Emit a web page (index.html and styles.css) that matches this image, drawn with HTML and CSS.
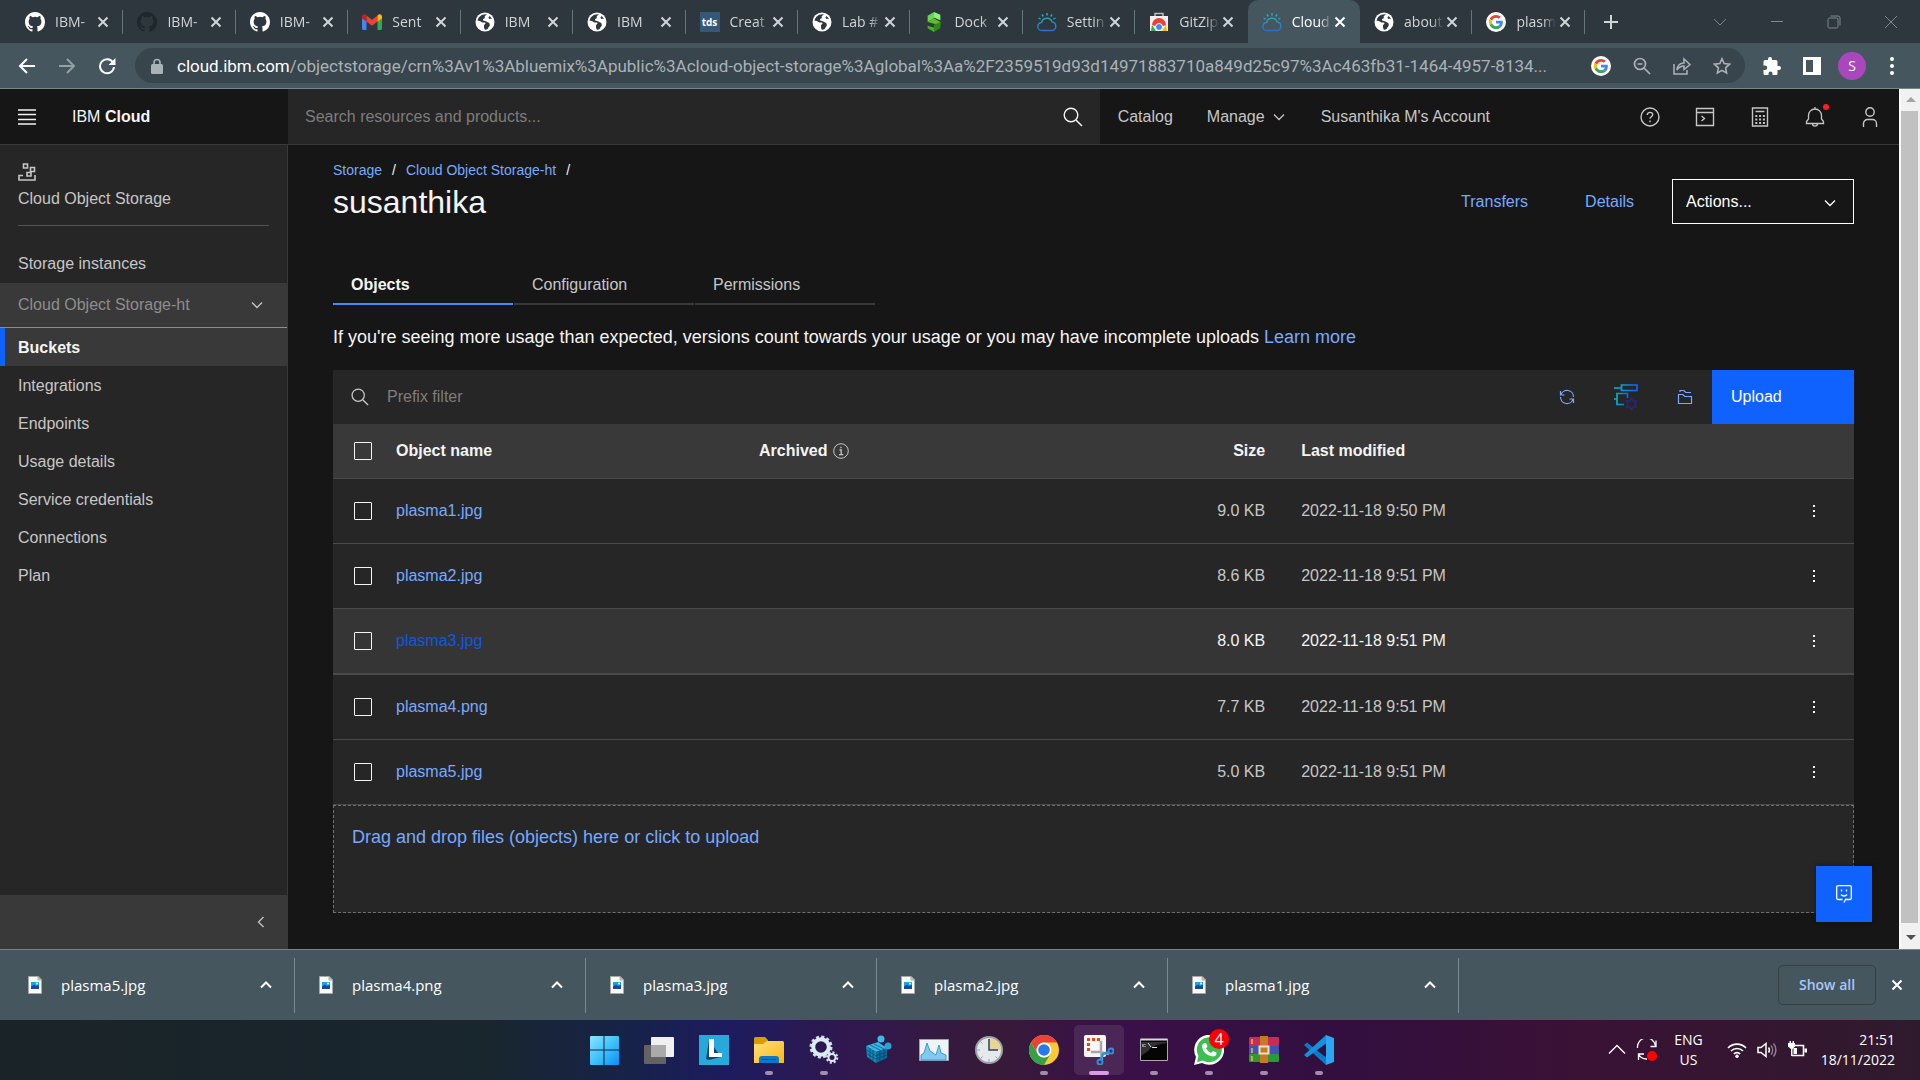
FILE: index.html
```html
<!DOCTYPE html>
<html lang="en">
<head>
<meta charset="utf-8">
<title>Cloud Object Storage - IBM Cloud</title>
<link rel="stylesheet" href="styles.css">
</head>
<body>
<svg class="defs" aria-hidden="true">
  <defs>
    <linearGradient id="sky" x1="0" y1="0" x2="0" y2="1"><stop offset="0" stop-color="#2fb5b0"/><stop offset="1" stop-color="#2a6fc9"/></linearGradient>
    <linearGradient id="win" x1="0" y1="0" x2="1" y2="1"><stop offset="0" stop-color="#8be4ff"/><stop offset=".5" stop-color="#41c2fb"/><stop offset="1" stop-color="#0a8ff5"/></linearGradient>
    <linearGradient id="fold" x1="0" y1="0" x2="1" y2="1"><stop offset="0" stop-color="#ffe07a"/><stop offset="1" stop-color="#fbb615"/></linearGradient>
    <linearGradient id="query" x1="0" y1="0" x2="1" y2="0"><stop offset="0" stop-color="#08bdba"/><stop offset="1" stop-color="#0f62fe"/></linearGradient>
  </defs>
  <symbol id="x" viewBox="0 0 12 12"><path d="M1.5 1.5l9 9M10.500 1.500l-9 9" stroke="currentColor" stroke-width="2" fill="none"/></symbol>
  <symbol id="github" viewBox="0 0 16 16"><path fill="currentColor" d="M8 0C3.580 0 0 3.580 0 8c0 3.540 2.290 6.530 5.470 7.590.4.070.55-.17.55-.38 0-.19-.01-.82-.01-1.490-2.010.37-2.530-.49-2.690-.94-.09-.23-.48-.94-.82-1.130-.28-.15-.68-.52-.01-.53.63-.01 1.080.58 1.230.82.72 1.210 1.870.87 2.330.66.07-.52.28-.87.51-1.070-1.780-.2-3.640-.89-3.640-3.950 0-.87.31-1.590.82-2.150-.08-.2-.36-1.020.08-2.120 0 0 .67-.21 2.200.82a7.600 7.600 0 0 1 4 0c1.530-1.040 2.200-.82 2.200-.82.44 1.100.16 1.920.08 2.120.51.56.82 1.270.82 2.150 0 3.070-1.870 3.750-3.650 3.950.29.25.54.73.54 1.480 0 1.070-.01 1.930-.01 2.200 0 .21.15.46.55.38A8 8 0 0 0 16 8c0-4.420-3.580-8-8-8z"/></symbol>
  <symbol id="gmail" viewBox="0 0 20 16"><path fill="#4285f4" d="M0 3v11.500C0 15.300.7 16 1.500 16H4.500V6z"/><path fill="#34a853" d="M20 3v11.500c0 .8-.7 1.500-1.500 1.500h-3V6z"/><path fill="#ea4335" d="M4.500 1.500L10 5.700l5.500-4.200v6L10 11.700 4.500 7.500z"/><path fill="#c5221f" d="M0 3v1.500l4.500 3v-6L3.600.7C2.100-.4 0 .6 0 3z"/><path fill="#fbbc04" d="M20 3v1.500l-4.500 3v-6l.9-.8C17.900-.4 20 .6 20 3z"/></symbol>
  <symbol id="globe" viewBox="0 0 20 20"><circle cx="10" cy="10" r="9.500" fill="#fff"/><path fill="#2d373d" d="M10.500 2.200C6.500 2.200 3 5 2.600 8.800c1.200-.3 2.600 0 3.600.9.900.9 2.300 1 3.400.8.9.1 1.200.8.6 1.500-.9.800-1.400 1.400-1.200 2.400.1 1 .1 2 .6 3.200 1 .1 2.200-.1 3.100-.6.300-1.600 1.600-2.300 2-3.600.4-1.500-.4-2.800-1.900-3.200-1.300-.3-1.600-1.300-2.900-1.300-1.100 0-1.900-.4-1.900-1.200 0-.9 1.300-.8 1.800-1.600.4-.8-.6-1.400.1-2.200.5-.5 1.200-.8 2.100-1.300zM14.500 4c-.9.800-1.300 1.800-.5 2.500.8.800 1.900.4 3 .7-.5-1.300-1.400-2.400-2.500-3.200z"/></symbol>
  <symbol id="sway" viewBox="0 0 16 22"><path fill="#8bf37c" d="M8 0l7 3v6L8 6z"/><path fill="#6bd25a" d="M8 0L1 4v7l7-4z"/><path fill="#5fbd2a" d="M1 11l7-4 7 4v3l-7-1z"/><path fill="#2e8b17" d="M15 11v7l-7 4v-8z"/><path fill="#45b12a" d="M1 15l7 2v5l-7-4z"/></symbol>
  <symbol id="ibmcloud" viewBox="0 0 20 20"><path fill="none" stroke="url(#sky)" stroke-width="1.400" d="M5 18.500a4 4 0 0 1-.4-8 5.500 5.500 0 0 1 10.500-.6 4.400 4.400 0 0 1 .4 8.600zM10 1v2.500M5 2.500l1.300 2M15 2.500l-1.300 2M1.500 6l2.200 1.200M18.500 6l-2.200 1.200"/></symbol>
  <symbol id="store" viewBox="0 0 20 20"><path d="M6 5V1.500h8V5" fill="none" stroke="#b9bdc0" stroke-width="1.500"/><path fill="#f1f1f1" d="M1 4h18v15H1z"/><path fill="#ea4335" d="M3 13a7 7 0 0 1 14 0l-3 1H6z"/><path fill="#34a853" d="M3 13l4 6H2z"/><path fill="#fbbc04" d="M17 13l-4 6h5z"/><circle cx="10" cy="15" r="3.500" fill="#4285f4" stroke="#fff"/></symbol>
  <symbol id="google" viewBox="0 0 48 48"><circle cx="24" cy="24" r="24" fill="#fff"/><g transform="translate(7 7) scale(.71)"><path fill="#EA4335" d="M24 9.500c3.540 0 6.710 1.220 9.210 3.600l6.850-6.850C35.900 2.380 30.470 0 24 0 14.620 0 6.510 5.380 2.560 13.220l7.980 6.190C12.430 13.720 17.740 9.500 24 9.500z"/><path fill="#4285F4" d="M46.980 24.550c0-1.570-.15-3.090-.38-4.550H24v9.020h12.940c-.58 2.960-2.260 5.480-4.780 7.180l7.730 6c4.510-4.180 7.090-10.360 7.090-17.650z"/><path fill="#FBBC05" d="M10.530 28.590A14.500 14.500 0 0 1 9.770 24c0-1.600.27-3.140.76-4.590l-7.980-6.190A24 24 0 0 0 0 24c0 3.870.92 7.540 2.560 10.780z"/><path fill="#34A853" d="M24 48c6.480 0 11.930-2.130 15.890-5.810l-7.730-6c-2.150 1.450-4.920 2.300-8.160 2.300-6.260 0-11.570-4.220-13.470-9.910l-7.980 6.190C6.510 42.620 14.620 48 24 48z"/></g></symbol>
  <symbol id="down" viewBox="0 0 16 16"><path d="M3 5.500l5 5 5-5" fill="none" stroke="currentColor" stroke-width="1.300"/></symbol>
  <symbol id="up" viewBox="0 0 14 14"><path d="M2 9.500l5-5 5 5" fill="none" stroke="currentColor" stroke-width="2"/></symbol>
  <symbol id="search" viewBox="0 0 20 20"><circle cx="8" cy="8" r="6.800" fill="none" stroke="currentColor" stroke-width="1.400"/><path d="M13 13l6 6" stroke="currentColor" stroke-width="1.500"/></symbol>
  <symbol id="kebab" viewBox="0 0 16 16"><path fill="currentColor" d="M7 2h2v2H7zM7 7h2v2H7zM7 12h2v2H7z"/></symbol>
  <symbol id="imgfile" viewBox="0 0 14 18"><path fill="#fdfdfd" stroke="#a8a8a8" d="M.5.500h9.500L13.500 4v13.500H.5z"/><path fill="#ccc" stroke="#a8a8a8" d="M10 .5V4h3.500z"/><path fill="#18a4e0" d="M3 6h8v7H3z"/><path fill="#154a9c" d="M3 10.500l3-2 2 1.500 3-1v4H3z"/><circle cx="9" cy="7.500" r="1" fill="#fff"/></symbol>
</svg>

<header class="browser">
  <div class="strip">
    <nav class="tabs" aria-label="Open tabs">
      <div class="tab"><svg class="fav"><use href="#github"/></svg><span class="name">IBM-</span><button class="close" aria-label="Close"><svg><use href="#x"/></svg></button></div>
      <div class="tab"><svg class="fav dim"><use href="#github"/></svg><span class="name">IBM-</span><button class="close" aria-label="Close"><svg><use href="#x"/></svg></button></div>
      <div class="tab"><svg class="fav"><use href="#github"/></svg><span class="name">IBM-</span><button class="close" aria-label="Close"><svg><use href="#x"/></svg></button></div>
      <div class="tab"><svg class="fav"><use href="#gmail"/></svg><span class="name">Sent</span><button class="close" aria-label="Close"><svg><use href="#x"/></svg></button></div>
      <div class="tab"><svg class="fav"><use href="#globe"/></svg><span class="name">IBM</span><button class="close" aria-label="Close"><svg><use href="#x"/></svg></button></div>
      <div class="tab"><svg class="fav"><use href="#globe"/></svg><span class="name">IBM</span><button class="close" aria-label="Close"><svg><use href="#x"/></svg></button></div>
      <div class="tab"><span class="fav tds">tds</span><span class="name">Creat</span><button class="close" aria-label="Close"><svg><use href="#x"/></svg></button></div>
      <div class="tab"><svg class="fav"><use href="#globe"/></svg><span class="name">Lab #</span><button class="close" aria-label="Close"><svg><use href="#x"/></svg></button></div>
      <div class="tab"><svg class="fav"><use href="#sway"/></svg><span class="name">Dock</span><button class="close" aria-label="Close"><svg><use href="#x"/></svg></button></div>
      <div class="tab"><svg class="fav"><use href="#ibmcloud"/></svg><span class="name">Settin</span><button class="close" aria-label="Close"><svg><use href="#x"/></svg></button></div>
      <div class="tab last-before"><svg class="fav"><use href="#store"/></svg><span class="name">GitZip</span><button class="close" aria-label="Close"><svg><use href="#x"/></svg></button></div>
      <div class="tab active"><svg class="fav"><use href="#ibmcloud"/></svg><span class="name">Cloud</span><button class="close" aria-label="Close"><svg><use href="#x"/></svg></button></div>
      <div class="tab"><svg class="fav"><use href="#globe"/></svg><span class="name">about</span><button class="close" aria-label="Close"><svg><use href="#x"/></svg></button></div>
      <div class="tab"><svg class="fav"><use href="#google"/></svg><span class="name">plasm</span><button class="close" aria-label="Close"><svg><use href="#x"/></svg></button></div>
    </nav>
    <div class="window">
      <button class="plus" aria-label="New tab"><svg viewBox="0 0 16 16"><path d="M8 1v14M1 8h14" stroke="currentColor" stroke-width="2"/></svg></button>
      <button aria-label="Search tabs"><svg viewBox="0 0 14 14"><path d="M1 4l6 6 6-6" fill="none" stroke="currentColor"/></svg></button>
      <button aria-label="Minimise"><svg viewBox="0 0 14 14"><path d="M1 6.500h12" stroke="currentColor"/></svg></button>
      <button aria-label="Restore"><svg viewBox="0 0 14 14"><rect x="1" y="3" width="10" height="10" rx="1.500" fill="none" stroke="currentColor"/><path d="M3.500 1H11a2 2 0 0 1 2 2v7.500" fill="none" stroke="currentColor"/></svg></button>
      <button aria-label="Close window"><svg viewBox="0 0 14 14"><path d="M1 1l12 12M13 1L1 13" stroke="currentColor"/></svg></button>
    </div>
  </div>
  <div class="toolbar">
    <button class="tool" aria-label="Back"><svg viewBox="0 0 18 18"><path d="M17 9H2M9 2L2 9l7 7" fill="none" stroke="currentColor" stroke-width="2"/></svg></button>
    <button class="tool faded" aria-label="Forward"><svg viewBox="0 0 18 18"><path d="M1 9h15M9 2l7 7-7 7" fill="none" stroke="currentColor" stroke-width="2"/></svg></button>
    <button class="tool" aria-label="Reload"><svg viewBox="0 0 18 18"><path d="M15 5.500A7 7 0 1 0 16 10" fill="none" stroke="currentColor" stroke-width="2"/><path d="M17.500 1v7h-7z" fill="currentColor"/></svg></button>
    <div class="omnibox">
      <svg class="lock" viewBox="0 0 12 16"><path d="M3 7V4.500a3 3 0 0 1 6 0V7" fill="none" stroke="currentColor" stroke-width="1.600"/><rect x="0" y="6" width="12" height="10" rx="1.500" fill="currentColor"/></svg>
      <div class="url" role="textbox" aria-label="Address"><b>cloud.ibm.com</b>/objectstorage/crn%3Av1%3Abluemix%3Apublic%3Acloud-object-storage%3Aglobal%3Aa%2F2359519d93d14971883710a849d25c97%3Ac463fb31-1464-4957-8134...</div>
      <div class="page-tools">
        <svg class="g"><use href="#google"/></svg>
        <svg viewBox="0 0 18 18"><circle cx="7" cy="7" r="5.500" fill="none" stroke="currentColor" stroke-width="1.700"/><path d="M11 11l6 6M4.500 7h5" stroke="currentColor" stroke-width="1.700"/></svg>
        <svg viewBox="0 0 18 18"><path d="M1 7v10h13v-4M4 13c.5-5 3.500-7 7-7V2l6 5.500-6 5V9c-3 0-5 1-7 4z" fill="none" stroke="currentColor" stroke-width="1.500"/></svg>
        <svg viewBox="0 0 18 18"><path d="M9 1.800l2.200 4.800 5.300.6-3.900 3.600 1 5.200L9 13.400 4.400 16l1-5.200L1.500 7.200l5.300-.6z" fill="none" stroke="currentColor" stroke-width="1.600"/></svg>
      </div>
    </div>
    <div class="extensions">
      <button class="tool" aria-label="Extensions"><svg viewBox="0 0 18 18"><path fill="currentColor" d="M7 0a2 2 0 0 1 2 2v1h4a1.500 1.500 0 0 1 1.500 1.500V9H16a2 2 0 0 1 0 4h-1.500v3.500A1.500 1.500 0 0 1 13 18H9.500v-1.500a2 2 0 0 0-4 0V18H2A1.500 1.500 0 0 1 .5 16.500V13H2a2 2 0 0 0 0-4.500H.5v-4A1.500 1.500 0 0 1 2 3h3V2a2 2 0 0 1 2-2z"/></svg></button>
      <button class="tool" aria-label="Side panel"><svg viewBox="0 0 18 18"><path fill="currentColor" fill-rule="evenodd" d="M0 0h18v18H0zM3 3v12h7V3z"/></svg></button>
      <button class="avatar" aria-label="Profile">S</button>
      <button class="tool" aria-label="Menu"><svg viewBox="0 0 18 18"><circle cx="9" cy="2" r="2" fill="currentColor"/><circle cx="9" cy="9" r="2" fill="currentColor"/><circle cx="9" cy="16" r="2" fill="currentColor"/></svg></button>
    </div>
  </div>
</header>

<div class="viewport">
  <div class="page">
    <header class="masthead">
      <div class="brand">
        <button class="burger" aria-label="Main menu"><svg viewBox="0 0 18 16"><path d="M0 1h18M0 5.500h18M0 10.500h18M0 15h18" stroke="currentColor" stroke-width="1.300"/></svg></button>
        <a href="#">IBM <b>Cloud</b></a>
      </div>
      <label class="finder"><input type="search" aria-label="Search" placeholder="Search resources and products..."><svg><use href="#search"/></svg></label>
      <nav class="links"><a href="#">Catalog</a><a href="#">Manage <svg><use href="#down"/></svg></a><a href="#">Susanthika M's Account</a></nav>
      <div class="actions">
        <button aria-label="Help"><svg viewBox="0 0 20 20" fill="none" stroke="currentColor" stroke-width="1.400"><circle cx="10" cy="10" r="9"/><path d="M7.300 8c0-3.500 5.400-3.500 5.400-.3 0 2-2.700 2-2.700 4M10 13.500v1.700"/></svg></button>
        <button aria-label="Shell"><svg viewBox="0 0 20 20" fill="none" stroke="currentColor" stroke-width="1.400"><path d="M1.500 1.500h17v17h-17zM1.500 5.500h17M6.500 9l3 2.500-3 2.500"/></svg></button>
        <button aria-label="Cost estimator"><svg viewBox="0 0 20 20" fill="none" stroke="currentColor" stroke-width="1.400"><path d="M2.500 1h15v18h-15zM5.500 4.500h9"/><path stroke-dasharray="2 1.800" stroke-width="2" d="M5.300 9h10M5.300 12.500h10M5.300 16h10"/></svg></button>
        <button class="bell" aria-label="Notifications"><svg viewBox="0 0 20 20" fill="none" stroke="currentColor" stroke-width="1.300"><path d="M10 0v2M1.500 16.500h17v-2l-2-2.500V8.500a6.500 6.500 0 0 0-13 0V12l-2 2.500zM7.500 16.500c0 3.500 5 3.500 5 0"/></svg></button>
        <button aria-label="Profile"><svg viewBox="0 0 20 20" fill="none" stroke="currentColor" stroke-width="1.400"><circle cx="10" cy="5" r="4.200"/><path d="M3.500 20v-3.500a4 4 0 0 1 4-4h5a4 4 0 0 1 4 4V20"/></svg></button>
      </div>
    </header>

    <div class="body">
      <aside class="side">
        <div class="service">
          <svg viewBox="0 0 18 18" fill="none" stroke="currentColor" stroke-width="1.600"><path d="M5.500 1h4v4h-4zM12.500 4.500h4v4h-4zM9 9.500h4v3.500H9zM5 12.500H1v4.500h16v-5"/></svg>
          <span>Cloud Object Storage</span>
        </div>
        <span class="group">Storage instances</span>
        <button class="instance">Cloud Object Storage-ht<svg><use href="#down"/></svg></button>
        <nav class="menu">
          <a class="current" href="#">Buckets</a><a href="#">Integrations</a><a href="#">Endpoints</a><a href="#">Usage details</a><a href="#">Service credentials</a><a href="#">Connections</a><a href="#">Plan</a>
        </nav>
        <button class="collapse" aria-label="Collapse"><svg viewBox="0 0 16 16"><path d="M10.500 3l-5 5 5 5" fill="none" stroke="currentColor" stroke-width="1.300"/></svg></button>
      </aside>

      <main class="content">
        <nav class="crumbs"><a href="#">Storage</a><span>/</span><a href="#">Cloud Object Storage-ht</a><span>/</span></nav>
        <div class="heading">
          <h1>susanthika</h1>
          <a href="#">Transfers</a><a href="#">Details</a>
          <div class="picker"><select aria-label="Actions"><option>Actions...</option></select><svg><use href="#down"/></svg></div>
        </div>
        <nav class="sections"><a class="current" href="#">Objects</a><a href="#">Configuration</a><a href="#">Permissions</a></nav>
        <p class="note">If you're seeing more usage than expected, versions count towards your usage or you may have incomplete uploads <a href="#">Learn more</a></p>

        <div class="filter">
          <label><svg><use href="#search"/></svg><input type="text" aria-label="Prefix filter" placeholder="Prefix filter"></label>
          <button aria-label="Refresh"><svg class="small" viewBox="0 0 16 16" fill="none" stroke="currentColor" stroke-width="1.200"><path d="M1.500 2v4h4M1.800 6A6.500 6.500 0 0 1 14.500 8M14.500 14v-4h-4M14.200 10A6.500 6.500 0 0 1 1.500 8"/></svg></button>
          <button aria-label="Query"><svg class="large" viewBox="0 0 24 26"><g fill="none" stroke="url(#query)" stroke-width="1.700"><path d="M7.500 1H23v5.500H7.500zM0 4h7.500v.1"/><path d="M13.500 14V9.500H3v11h7M0 15h3"/></g><path fill="none" stroke="#27277c" stroke-width="1.500" d="M17.500 14.500l1.800 2.700 3.200-.3-1.400 3.100 1.400 3.100-3.200-.3-1.800 2.700-1.800-2.700-3.200.3 1.400-3.100-1.400-3.100 3.200.3z"/></svg></button>
          <button aria-label="Folder"><svg class="small" viewBox="0 0 16 16" fill="none" stroke="currentColor" stroke-width="1.200"><path d="M1.500 14.500v-9h4.300l2 2h6.700v7zM3 3V1.500h3.800l2 2h5.200"/></svg></button>
          <button class="upload">Upload</button>
        </div>
        <table class="objects">
          <colgroup><col class="c-check"><col class="c-name"><col class="c-arch"><col class="c-size"><col><col class="c-menu"></colgroup>
          <thead><tr><th><input type="checkbox" aria-label="Select all"></th><th>Object name</th><th class="arch"><span>Archived <svg viewBox="0 0 16 16" fill="none" stroke="currentColor"><circle cx="8" cy="8" r="7.300"/><path stroke-width="1.300" d="M6.500 7h1.700v4.500M6 11.700h4.300M7.900 3.800v1.500"/></svg></span></th><th class="size">Size</th><th class="date">Last modified</th><th></th></tr></thead>
          <tbody>
            <tr><td><input type="checkbox" aria-label="plasma1.jpg"></td><td><a href="#">plasma1.jpg</a></td><td></td><td class="size">9.0 KB</td><td class="date">2022-11-18 9:50 PM</td><td><button aria-label="Options"><svg><use href="#kebab"/></svg></button></td></tr>
            <tr><td><input type="checkbox" aria-label="plasma2.jpg"></td><td><a href="#">plasma2.jpg</a></td><td></td><td class="size">8.6 KB</td><td class="date">2022-11-18 9:51 PM</td><td><button aria-label="Options"><svg><use href="#kebab"/></svg></button></td></tr>
            <tr class="hot"><td><input type="checkbox" aria-label="plasma3.jpg"></td><td><a href="#">plasma3.jpg</a></td><td></td><td class="size">8.0 KB</td><td class="date">2022-11-18 9:51 PM</td><td><button aria-label="Options"><svg><use href="#kebab"/></svg></button></td></tr>
            <tr><td><input type="checkbox" aria-label="plasma4.png"></td><td><a href="#">plasma4.png</a></td><td></td><td class="size">7.7 KB</td><td class="date">2022-11-18 9:51 PM</td><td><button aria-label="Options"><svg><use href="#kebab"/></svg></button></td></tr>
            <tr><td><input type="checkbox" aria-label="plasma5.jpg"></td><td><a href="#">plasma5.jpg</a></td><td></td><td class="size">5.0 KB</td><td class="date">2022-11-18 9:51 PM</td><td><button aria-label="Options"><svg><use href="#kebab"/></svg></button></td></tr>
          </tbody>
        </table>
        <button class="drop">Drag and drop files (objects) here or click to upload</button>
        <button class="chat" aria-label="Feedback"><svg viewBox="0 0 16 18" fill="none" stroke="currentColor" stroke-width="1.300"><path d="M9.500 14.500H14a1.300 1.300 0 0 0 1.300-1.300V2A1.300 1.300 0 0 0 14 .7H2A1.300 1.300 0 0 0 .7 2v11.200A1.300 1.300 0 0 0 2 14.500h4.500M10 13.500L8 17.500M5.500 4.500v2M10.500 4.500v2M5 9.500c1.500 2 4.500 2 6 0"/></svg></button>
      </main>
    </div>
  </div>
  <div class="scroll" aria-hidden="true"><i class="arrow-up"></i><div class="thumb"></div><i class="arrow-down"></i></div>
</div>

<section class="downloads" aria-label="Downloads">
  <div class="file"><svg><use href="#imgfile"/></svg><span>plasma5.jpg</span><button aria-label="Options"><svg><use href="#up"/></svg></button></div>
  <div class="file"><svg><use href="#imgfile"/></svg><span>plasma4.png</span><button aria-label="Options"><svg><use href="#up"/></svg></button></div>
  <div class="file"><svg><use href="#imgfile"/></svg><span>plasma3.jpg</span><button aria-label="Options"><svg><use href="#up"/></svg></button></div>
  <div class="file"><svg><use href="#imgfile"/></svg><span>plasma2.jpg</span><button aria-label="Options"><svg><use href="#up"/></svg></button></div>
  <div class="file"><svg><use href="#imgfile"/></svg><span>plasma1.jpg</span><button aria-label="Options"><svg><use href="#up"/></svg></button></div>
  <button class="show-all">Show all</button>
  <button class="dismiss" aria-label="Close"><svg><use href="#x"/></svg></button>
</section>

<footer class="taskbar">
  <div class="apps">
    <button aria-label="Start"><svg viewBox="0 0 30 30"><path fill="url(#win)" d="M1 2a1 1 0 0 1 1-1h12.500v13.500H1zM15.500 1H29a1 1 0 0 1 1 1v12.500H15.500zM1 15.500h13.500V30H2a1 1 0 0 1-1-1zM15.500 15.500H30V29a1 1 0 0 1-1 1H15.500z"/></svg></button>
    <button aria-label="Task view"><svg viewBox="0 0 30 30"><rect x="0" y="10" width="22" height="19" rx="1" fill="#636363"/><rect x="7" y="2" width="23" height="20" rx="1" fill="#f0f0f0"/><path fill="#aaa" d="M7 10h15v12H7z"/></svg></button>
    <button aria-label="L"><svg viewBox="0 0 30 30"><path fill="#27a9dc" d="M0 0h30v30H0z"/><path fill="#15456e" d="M10 5L7 24l3 1 12-3z"/><path fill="#fff" d="M10 4h5v14h8v4H10z"/></svg></button>
    <button class="on" aria-label="File Explorer"><svg viewBox="0 0 30 30"><path fill="#dd9a07" d="M0 3.500A1.500 1.500 0 0 1 1.500 2H11l3 3v6H0z"/><path fill="url(#fold)" d="M0 9h9l4-3h15.500A1.500 1.500 0 0 1 30 7.500V28H0z"/><path fill="#0b78ca" d="M5 24a3 3 0 0 1 3-3h14a3 3 0 0 1 3 3v4H5z"/><path stroke="#064f96" d="M8 24.500h14"/></svg></button>
    <button class="on" aria-label="Services"><svg viewBox="0 0 30 30"><circle cx="12" cy="12" r="10" fill="none" stroke="#cfdfe8" stroke-width="3" stroke-dasharray="3 2.230"/><circle cx="12" cy="12" r="7.800" fill="none" stroke="#dceaf2" stroke-width="4"/><circle cx="23" cy="22.500" r="5" fill="none" stroke="#cfdfe8" stroke-width="2.500" stroke-dasharray="2 1.900"/><circle cx="23" cy="22.500" r="3.500" fill="none" stroke="#dceaf2" stroke-width="2"/></svg></button>
    <button aria-label="Registry Editor"><svg viewBox="0 0 30 30"><path fill="#35b8e6" d="M2 11l12-4 9 6-11 4z"/><path fill="#1688ba" d="M2 11l10 6v11L3 22z"/><path fill="#0b6b9c" d="M12 17l11-4v10l-11 5z"/><path stroke="#073c5c" stroke-width=".6" fill="none" d="M2.500 15l9.500 6 11-4M3 19l9 5 11-4M6 13v12M9 15v12M16 16v11M20 15v10M6 10l10 5M10 9l10 5"/><circle cx="17" cy="4" r="3.500" fill="#3cbbe8"/><circle cx="24" cy="11" r="3.500" fill="#2aa3d4"/></svg></button>
    <button aria-label="Performance Monitor"><svg viewBox="0 0 30 30"><path fill="#eef3f6" stroke="#9aa4aa" d="M.5 4.500h29v21H.5z"/><path fill="#83c8ee" stroke="#3b9cd0" d="M2 20l3-2 3-10 3 8 6 4 3-10 2 8 5 2v5H2z"/></svg></button>
    <button aria-label="Clock"><svg viewBox="0 0 30 30"><circle cx="15" cy="15" r="13" fill="#e3e9ec" stroke="#9aa3a8" stroke-width="2"/><path fill="#e9d498" d="M15 15V3a12 12 0 0 1 12 12z"/><path stroke="#26465a" stroke-width="1.500" fill="none" d="M15 4v11h9"/><path stroke="#9aa3a8" d="M15 24v3M3 15h3M6.500 6.500l2 2M6.500 23.500l2-2M23.500 23.500l-2-2"/></svg></button>
    <button class="on" aria-label="Chrome"><svg viewBox="0 0 30 30"><circle cx="15" cy="15" r="15" fill="#fcc934"/><path fill="#ea4335" d="M2 7.500a15 15 0 0 1 26 0H15a7.500 7.500 0 0 0-6.500 11.250z"/><path fill="#34a04a" d="M2 7.500l6.500 11.250A7.500 7.500 0 0 0 21.500 18.750L15 30A15 15 0 0 1 2 7.500z"/><circle cx="15" cy="15" r="7.500" fill="#fff"/><circle cx="15" cy="15" r="5.800" fill="#2b78ee"/></svg></button>
    <button class="on selected" aria-label="Snipping Tool"><svg viewBox="0 0 30 30"><rect width="22" height="22" rx="2" fill="#f7f7f7"/><path fill="none" stroke="#e0491b" stroke-width="3" stroke-dasharray="3 2" d="M4.500 16V4.500H18"/><path fill="none" stroke="#a7a7a7" stroke-width="2.500" d="M7 17h9l9 2M17 6v11l1 8"/><circle cx="27" cy="16" r="2.500" fill="none" stroke="#2a93d8" stroke-width="2"/><circle cx="16" cy="27" r="2.500" fill="none" stroke="#2a93d8" stroke-width="2"/><path stroke="#2a93d8" stroke-width="2.500" fill="none" d="M17 24l2-5 6-2"/></svg></button>
    <button class="on" aria-label="Terminal"><svg viewBox="0 0 30 30"><path fill="#050505" stroke="#a8a8a8" d="M1.500 4.500h27v21h-27z"/><path fill="#555" d="M2 7h26v1q-14 1-19 8l-7 5z" opacity=".55"/><path fill="#d8d8d8" d="M1.500 3.500h27v2h-27z"/><path stroke="#ddd" d="M4 9v3M6 9v1M6 11v1M9 8l3 4M13 12.500h5"/></svg></button>
    <button class="on" aria-label="WhatsApp"><svg viewBox="0 0 30 30"><path fill="#fff" d="M0 30l2-8A15 15 0 1 1 8 28z"/><path fill="#3bbf50" d="M3 27l1.500-6A12.500 12.500 0 1 1 9 25.500z"/><path fill="#fff" d="M10 8h2l1.500 3.500L12 13.500q1.500 3 5 4.500l2-2 3.500 1.500q.5 4-4 4Q9.500 20 8 12q0-3 2-4z"/></svg><span class="badge">4</span></button>
    <button class="on" aria-label="WinRAR"><svg viewBox="0 0 30 30"><rect y="2" width="30" height="9" rx="1" fill="#c72c55"/><rect y="11" width="30" height="8" fill="#4350b5"/><rect y="19" width="30" height="8" rx="1" fill="#259c39"/><path stroke="#f1b83a" stroke-width="1.500" d="M3 4v5M3 13v5M3 21v5"/><path fill="#c97a21" d="M11 1h8v27h-8z"/><path fill="none" stroke="#e9dfc5" stroke-width="2" d="M10.500 11.500h9v7h-9z"/></svg></button>
    <button class="on" aria-label="Visual Studio Code"><svg viewBox="0 0 30 30"><path fill="#0a7bc9" d="M0 10l3-2.500L24 24l-2 6z"/><path fill="#1590dc" d="M0 20l3 2.500L24 7l-2-7z"/><path fill="#2aa6f2" d="M22 0l8 3v24l-8 3z"/></svg></button>
  </div>
  <div class="tray">
    <svg class="wide" viewBox="0 0 18 18"><path d="M1 12.500l8-8 8 8" fill="none" stroke="currentColor" stroke-width="1.300"/></svg>
    <svg class="sync" viewBox="0 0 22 22"><path d="M1.500 9A9 9 0 0 1 19.500 7M20 1.500V7.500h-5.500M11 20a9 9 0 0 1-8.500-5M2.500 21v-6H8" fill="none" stroke="currentColor" stroke-width="1.300"/><circle cx="16" cy="17" r="5" fill="#f00"/></svg>
    <div class="lang">ENG<br>US</div>
    <svg class="status" viewBox="0 0 20 18"><g fill="none" stroke="currentColor" stroke-width="1.600"><path d="M1 7a12.500 12.500 0 0 1 18 0M4 10a8.500 8.500 0 0 1 12 0M6.800 13a4.500 4.500 0 0 1 6.400 0"/></g><circle cx="10" cy="15.300" r="1.700" fill="currentColor"/></svg>
    <svg class="status" viewBox="0 0 20 18"><g fill="none" stroke="currentColor" stroke-width="1.500"><path d="M1 6.500h3l5-4v13l-5-4H1zM11.500 6.500a4 4 0 0 1 0 5"/><path opacity=".45" d="M14 4.500a7 7 0 0 1 0 9M16.500 2.500a10 10 0 0 1 0 13"/></g></svg>
    <svg class="status" viewBox="0 0 20 18"><path fill="none" stroke="currentColor" stroke-width="1.600" d="M7 4.500h9.500v10H5"/><path fill="currentColor" d="M1 2h1.500v-2H4v2h1.500v-2H7v2h1v3.500L5.500 8v7H4V8L1 5.500zM6.500 7H10v6H6.500zM17.500 7.500H20v4h-2.500z"/></svg>
    <div class="clock">21:51<br>18/11/2022</div>
  </div>
</footer>
</body>
</html>
```
FILE: styles.css
```css
* { box-sizing: border-box; }
body {
  margin: 0;
  min-height: 100vh;
  display: flex;
  flex-direction: column;
  background: #161616;
  color: #c6c6c6;
  font: 16px/20px "Liberation Sans", Arial, sans-serif;
}
button, input, select { font: inherit; color: inherit; background: none; border: 0; padding: 0; margin: 0; border-radius: 0; }
button { display: flex; align-items: center; justify-content: center; }
a { color: #78a9ff; text-decoration: none; }
svg { flex: none; display: block; width: 20px; height: 20px; }
.defs { position: absolute; width: 0; height: 0; }

/* Browser chrome */
.browser, .downloads, .taskbar { font-family: "Open Sans", "Noto Sans", sans-serif; }
.strip { display: flex; height: 43px; background: #2d373d; }
.tabs { flex: 1; min-width: 0; display: flex; padding-left: 11px; }
.tab { flex: 1 1 0; min-width: 0; display: flex; align-items: center; padding: 0 14px; position: relative; color: #d0d5d7; font-size: 14px; }
.tab::after { content: ""; position: absolute; right: 0; top: 10px; height: 24px; width: 1px; background: #66757c; }
.tab.active::after, .tab.last-before::after { display: none; }
.tab.active { background: #45565f; border-radius: 10px 10px 0 0; color: #fff; }
.fav { flex: none; width: 20px; height: 20px; color: #fff; }
.fav.dim { color: #20272c; }
.tds { background: #355876; color: #fff; font-size: 10px; font-weight: 700; text-align: center; }
.name { flex: 1; min-width: 0; margin: 0 2px 0 10px; overflow: hidden; white-space: nowrap; -webkit-mask-image: linear-gradient(90deg, #000 27px, transparent 40px); mask-image: linear-gradient(90deg, #000 27px, transparent 40px); }
.close svg { width: 12px; height: 12px; }
.window { flex: none; width: 335px; display: flex; align-items: center; color: #7c8990; }
.window button { width: 57px; }
.window svg { width: 14px; height: 14px; }
.window .plus { width: 52px; margin-right: 54px; color: #d0d5d7; }
.plus svg { width: 16px; height: 16px; }
.toolbar { display: flex; align-items: center; height: 46px; padding: 0 8px 0 7px; background: #45565f; border-bottom: 1px solid #75858d; }
.tool { width: 40px; height: 36px; color: #fff; }
.tool svg { width: 18px; height: 18px; }
.tool.faded { color: #95a0a6; }
.omnibox { flex: 1; min-width: 0; height: 35px; margin-left: 8px; padding: 0 14px 0 16px; border-radius: 18px; background: #39454c; display: flex; align-items: center; color: #a9b2b7; }
.lock { width: 12px; height: 16px; }
.url { flex: 1; min-width: 0; margin-left: 14px; font: 17px/24px Roboto, "Open Sans", sans-serif; white-space: nowrap; overflow: hidden; }
.url b { font-weight: 400; color: #fff; }
.page-tools { display: flex; gap: 22px; align-items: center; }
.page-tools svg { width: 18px; height: 18px; }
.page-tools .g { width: 20px; height: 20px; }
.extensions { display: flex; align-items: center; margin-left: 7px; }
.avatar { width: 28px; height: 28px; margin: 0 6px; border-radius: 50%; background: #ab47bc; color: #fff; font-size: 14px; }

/* Page frame */
.viewport { flex: 1; display: flex; }
.page { flex: 1; min-width: 0; display: flex; flex-direction: column; }
.scroll { width: 21px; background: #f1f1f1; border-left: 2px solid #fafafa; display: flex; flex-direction: column; align-items: center; }
.thumb { flex: 1; align-self: stretch; margin: 9px 2px 12px 0; background: #c1c1c1; }
.arrow-up, .arrow-down { border: 5px solid transparent; }
.arrow-up { margin-top: 3px; border-bottom-color: #a3a3a3; }
.arrow-down { margin-bottom: 4px; border-top-color: #505050; }

/* Masthead */
.masthead { display: flex; height: 56px; border-bottom: 1px solid #393939; color: #c6c6c6; }
.masthead a { color: inherit; }
.brand { width: 288px; display: flex; align-items: center; gap: 36px; padding-left: 18px; color: #f4f4f4; }
.burger svg { width: 18px; height: 16px; }
.finder { flex: 1; display: flex; align-items: center; padding: 0 17px; background: #262626; color: #f4f4f4; }
.finder input { flex: 1; min-width: 0; outline: 0; }
.finder input::placeholder, .filter input::placeholder { color: #7d7d7d; opacity: 1; }
.links { display: flex; align-items: center; gap: 34px; padding: 0 0 0 18px; }
.links a { display: flex; align-items: center; gap: 6px; }
.links svg { width: 16px; height: 16px; }
.actions { display: flex; align-items: center; margin: 0 2px 0 132px; }
.actions button { width: 55px; height: 55px; }
.bell { position: relative; }
.bell::after { content: ""; position: absolute; left: 36px; top: 15px; width: 6px; height: 6px; border-radius: 50%; background: #fa1e28; }

.body { flex: 1; display: flex; }

/* Side navigation */
.side { width: 288px; display: flex; flex-direction: column; background: #262626; border-right: 1px solid #393939; }
.service { margin: 0 18px; padding: 18px 0 16px; border-bottom: 1px solid #525252; }
.service svg { width: 18px; height: 18px; margin-bottom: 8px; }
.group { padding: 28px 18px 9px; }
.instance { justify-content: space-between; height: 45px; padding: 0 22px 0 18px; background: #393939; border-bottom: 1px solid #8d8d8d; color: #8d8d8d; }
.instance svg { width: 16px; height: 16px; color: #c6c6c6; }
.menu { display: flex; flex-direction: column; }
.menu a { padding: 10px 18px 8px; color: #c6c6c6; }
.menu .current { background: #393939; color: #f4f4f4; font-weight: 700; box-shadow: inset 5px 0 #0f62fe; }
.collapse { margin-top: auto; height: 54px; padding-right: 18px; justify-content: flex-end; background: #393939; }
.collapse svg { width: 16px; height: 16px; }

/* Content */
.content { flex: 1; min-width: 0; padding: 16px 45px 36px; position: relative; }
.crumbs { display: flex; gap: 10px; font-size: 14px; line-height: 18px; color: #f4f4f4; }
.heading { display: flex; align-items: center; height: 45px; }
h1 { flex: 1; margin: 0; font-size: 32px; font-weight: 400; line-height: 40px; color: #f4f4f4; }
.heading > a { margin-right: 57px; }
.heading > a + a { margin-right: 38px; }
.picker { position: relative; width: 182px; height: 45px; border: 1px solid #fff; color: #fff; }
.picker select { width: 100%; height: 100%; padding: 0 13px; appearance: none; }
.picker svg { position: absolute; right: 15px; top: 15px; width: 16px; height: 16px; pointer-events: none; }
.sections { display: flex; gap: 1px; margin-top: 42px; }
.sections a { width: 180px; padding: 9px 18px 8px; border-bottom: 2px solid #393939; color: #c6c6c6; }
.sections .current { border-color: #4589ff; color: #f4f4f4; font-weight: 700; }
.note { margin: 20px 0 21px; font-size: 18px; line-height: 24px; color: #f4f4f4; }
.filter { display: flex; height: 54px; background: #262626; }
.filter label { flex: 1; display: flex; align-items: center; padding-left: 18px; }
.filter label svg { width: 18px; height: 18px; margin-right: 18px; }
.filter input { flex: 1; outline: 0; }
.filter button { width: 59px; padding-left: 4px; color: #78a9ff; }
.small { width: 16px; height: 16px; }
.large { width: 24px; height: 26px; }
.filter .upload { width: 142px; padding-left: 19px; justify-content: flex-start; background: #0f62fe; color: #fff; }
.objects { width: 100%; table-layout: fixed; border-collapse: separate; border-spacing: 0; background: #262626; }
.c-check { width: 63px; }
.c-name { width: 345px; }
.c-arch { width: 20%; }
.c-size { width: 238px; }
.c-menu { width: 80px; }
.objects th, .objects td { height: 65px; padding: 0; text-align: left; border-bottom: 1px solid #4a4a4a; }
.objects th { height: 55px; background: #393939; color: #f4f4f4; font-weight: 700; }
.objects .arch { padding-left: 18px; }
.arch span { display: flex; align-items: center; gap: 6px; }
.arch svg { width: 16px; height: 16px; color: #c6c6c6; }
.objects .size { text-align: right; padding-right: 18px; }
.objects .date { padding-left: 18px; }
.objects .hot td { height: 66px; background: #353535; border-bottom-width: 2px; color: #f4f4f4; }
.hot a { color: #0f56e8; }
.objects input { display: block; appearance: none; width: 18px; height: 18px; margin-left: 21px; border: 1px solid #f4f4f4; border-radius: 1px; }
.objects button { width: 100%; color: #f4f4f4; }
.objects button svg { width: 16px; height: 16px; }
.drop { width: 100%; height: 108px; padding: 19px 18px; align-items: flex-start; justify-content: flex-start; background: #262626; border: 1px dashed #6f6f6f; color: #78a9ff; font-size: 18px; line-height: 24px; }
.chat { position: absolute; right: 27px; bottom: 27px; width: 56px; height: 56px; background: #0f62fe; color: #fff; box-shadow: 0 0 5px #0006; }
.chat svg { width: 16px; height: 18px; }

/* Downloads shelf */
.downloads { display: flex; align-items: center; height: 71px; padding: 0 8px 0 4px; background: #45565f; border-top: 1px solid #75858d; color: #fff; font-size: 15px; }
.file { width: 291px; height: 55px; padding: 0 21px 0 23px; display: flex; align-items: center; border-right: 1px solid #7b8a91; }
.file > svg { width: 16px; height: 18px; margin-right: 18px; }
.file button { margin-left: auto; }
.file button svg { width: 14px; height: 14px; }
.show-all { margin-left: auto; width: 98px; height: 40px; border: 1px solid #373f43; border-radius: 5px; color: #a8c7fa; font-size: 14px; font-weight: 600; }
.dismiss { width: 30px; margin-left: 6px; }
.dismiss svg { width: 12px; height: 12px; }

/* Taskbar */
.taskbar { display: flex; justify-content: flex-end; align-items: center; height: 60px; padding-right: 25px; color: #fff; background: linear-gradient(90deg, #1a2328, #18262d 25%, #17224a 33%, #1d1b5e 38%, #30184f 44%, #371a38 52%, #3a1048 58%, #320f3f 70%, #3a1136 81%, #2f1a2c); }
.apps { display: flex; gap: 5px; }
.apps button { position: relative; width: 50px; height: 50px; border-radius: 5px; }
.apps svg { width: 30px; height: 30px; }
.apps .on::after { content: ""; position: absolute; left: 21px; bottom: 0; width: 8px; height: 4px; border-radius: 2px; background: #a08dac; }
.apps .selected { background: #4b2758; }
.apps .selected::after { left: 15px; width: 20px; background: #dc9be4; }
.badge { position: absolute; right: 5px; top: 4px; width: 20px; height: 20px; border-radius: 50%; background: #f00; font-size: 16px; line-height: 20px; text-align: center; }
.tray { display: flex; align-items: center; justify-content: flex-end; width: 551px; font-size: 14px; }
.wide { width: 18px; height: 18px; margin-right: 10px; }
.sync { width: 22px; height: 22px; }
.lang { margin: 0 24px 0 16px; text-align: center; }
.status { width: 20px; height: 18px; margin-right: 10px; }
.clock { margin-left: 4px; text-align: right; }
```
